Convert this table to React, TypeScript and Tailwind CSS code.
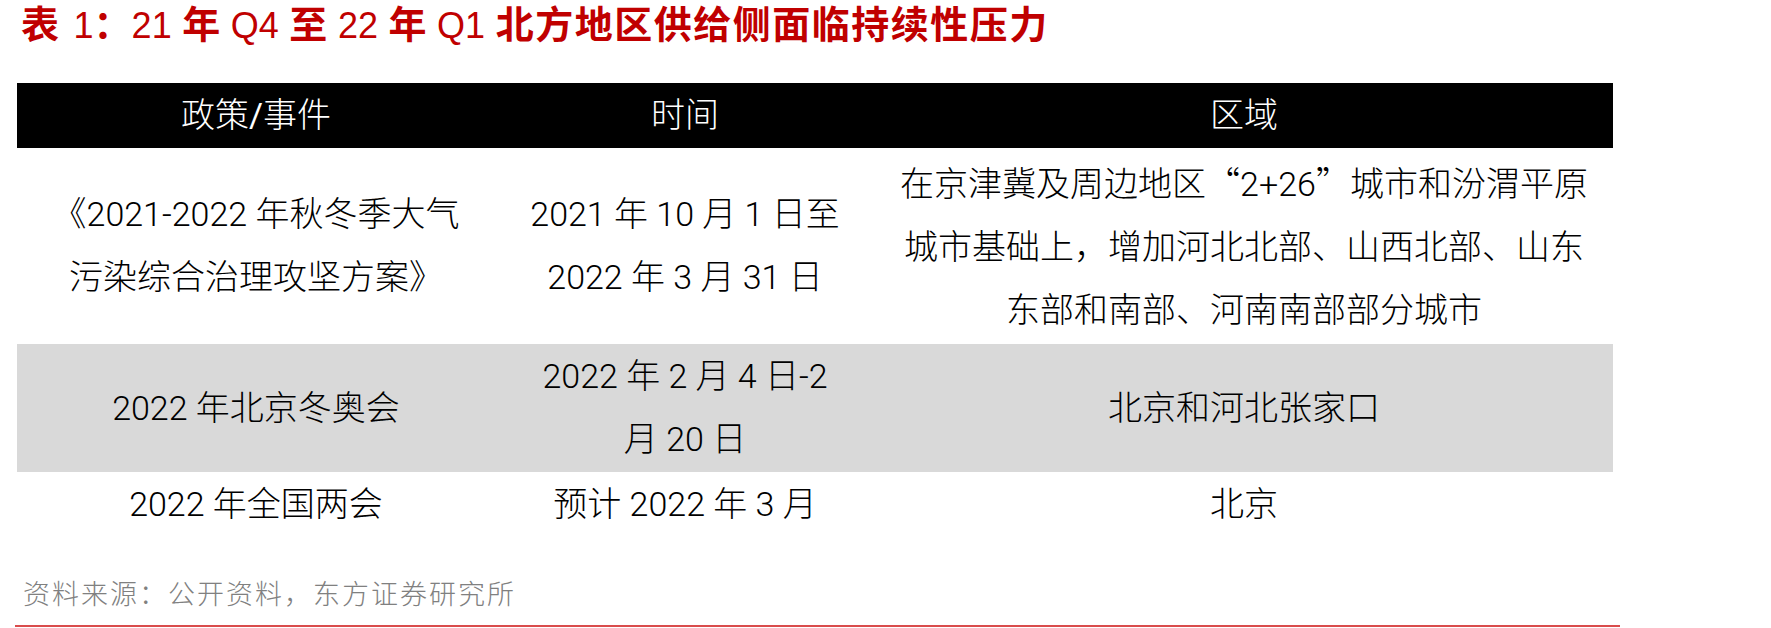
import React from "react";

const body = "font-['Roboto','Noto_Sans_CJK_SC_Light','Noto_Sans_CJK_SC',sans-serif]";
const cjk = "font-['Noto_Sans_CJK_SC_Light','Noto_Sans_CJK_SC',sans-serif]";

function Cell({ lines }: { lines: React.ReactNode[] }) {
  return (
    <div className="flex flex-col items-center justify-center text-center">
      {lines.map((l, i) => (
        <div key={i} className="leading-[63px] whitespace-nowrap">
          {l}
        </div>
      ))}
    </div>
  );
}

function L({ children }: { children: React.ReactNode }) {
  return <span className="font-normal text-[36px]">{children}</span>;
}

export default function App() {
  const cols = "grid grid-cols-[478px_380px_738px]";
  return (
    <div className={`w-[1771px] h-[628px] bg-white overflow-hidden ${body}`}>
      <div className="pl-[21px] h-[50px] leading-[50px] text-[38px] font-bold text-[#c00000] whitespace-nowrap font-['Liberation_Sans','Noto_Sans_CJK_SC',sans-serif]">
        表 <span className="font-normal text-[36px] ml-[4px]">1</span>：<L>21</L> 年 <L>Q4</L> 至 <L>22</L> 年 <L>Q1</L>{" "}
        <span className="tracking-[1.5px]">北方地区供给侧面临持续性压力</span>
      </div>

      <div className="ml-[17px] mt-[33px] w-[1596px] text-[34px] font-light text-black">
        <div className={`${cols} h-[65px] bg-black text-white font-normal`}>
          <div className="flex items-center justify-center">政策/事件</div>
          <div className="flex items-center justify-center">时间</div>
          <div className="flex items-center justify-center">区域</div>
        </div>

        <div className={`${cols} h-[196px]`}>
          <Cell lines={["《2021-2022 年秋冬季大气", "污染综合治理攻坚方案》"]} />
          <Cell lines={["2021 年 10 月 1 日至", "2022 年 3 月 31 日"]} />
          <Cell
            lines={[
              <>
                在京津冀及周边地区<span className={cjk}>“</span>2+26<span className={cjk}>”</span>城市和汾渭平原
              </>,
              "城市基础上，增加河北北部、山西北部、山东",
              "东部和南部、河南南部部分城市",
            ]}
          />
        </div>

        <div className={`${cols} h-[128px] bg-[#d9d9d9]`}>
          <Cell lines={["2022 年北京冬奥会"]} />
          <Cell lines={["2022 年 2 月 4 日-2", "月 20 日"]} />
          <Cell lines={["北京和河北张家口"]} />
        </div>

        <div className={`${cols} h-[64px]`}>
          <Cell lines={["2022 年全国两会"]} />
          <Cell lines={["预计 2022 年 3 月"]} />
          <Cell lines={["北京"]} />
        </div>
      </div>

      <div className="mt-[39px] pl-[23px] h-[40px] leading-[40px] text-[27px] tracking-[2px] text-[#808080] font-light whitespace-nowrap">
        资料来源：公开资料，东方证券研究所
      </div>
      <div className="mt-[10px] ml-[15px] w-[1605px] h-[2px] bg-[#d94c4c]" />
    </div>
  );
}
